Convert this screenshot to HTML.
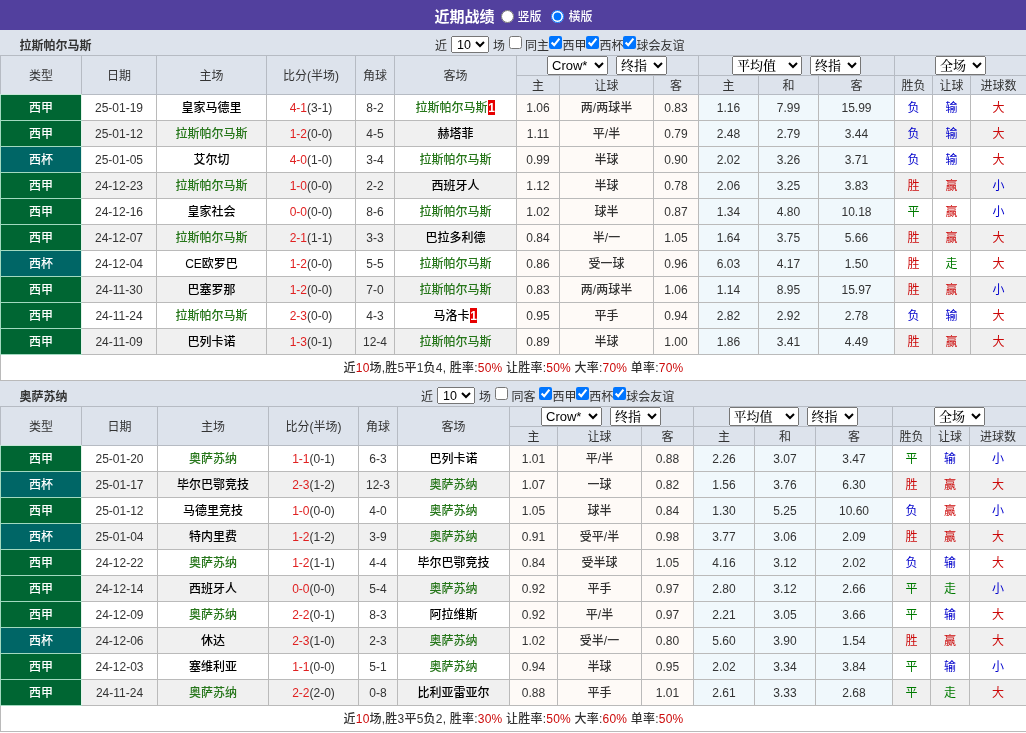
<!DOCTYPE html>
<html lang="zh-CN"><head><meta charset="utf-8"><title>近期战绩</title>
<style>
*{box-sizing:border-box}
html,body{margin:0;padding:0;background:#fff}
body{width:1026px;will-change:transform;overflow:hidden;font-family:"Liberation Sans","Noto Sans CJK SC",sans-serif;font-size:12px;color:#333;line-height:1}
.title{height:30px;background:#52409e;color:#fff;position:relative;font-size:12px}
.title b{position:absolute;left:434.6px;top:9px;font-size:15px;line-height:15px}
.title input{position:absolute;margin:0;top:10px;width:13px;height:13px}
.title span{position:absolute;top:11px;font-weight:500;margin-left:.6px;line-height:12px}
.tb{height:25px;background:#dde3ec;position:relative}
.tn{position:absolute;left:19.5px;top:10px;font-weight:bold;font-size:12px;line-height:12px;color:#333}
.flt{position:absolute;left:0;top:0;font-size:12px;white-space:nowrap;color:#333}
.flt span{position:absolute;top:10px;line-height:12px}
.flt input{position:absolute;margin:0;top:6px;width:13px;height:13px}
.flt select{position:absolute;top:6px;width:38px;height:17px;font-size:12.5px;padding:0 0 2px 1px;font-family:"Liberation Sans","Noto Serif CJK SC",sans-serif}
table.t{border-collapse:collapse;table-layout:fixed;width:1026px}
.t th,.t td{border:1px solid #bababa;text-align:center;padding:0;font-weight:normal;overflow:hidden;white-space:nowrap}
.t th{background:#dde3ec;color:#333;padding-top:2px;border-color:#b6bbc3}
.h1{height:20px}.h2{height:19px}
.h1 th[colspan]{padding-top:0;font-size:0;vertical-align:middle}
.h1 select{font-weight:500;height:19px;margin:0 4px;font-size:13px;vertical-align:middle;font-family:"Liberation Sans","Noto Serif CJK SC",sans-serif}
.s1,.s1+.s2{position:relative;left:-.5px}
.s1{width:61px}.s2{width:51px}.s3{width:70px}.s4{width:51px}
.t td{height:26px;font-weight:500}
tr.z td{background:#f0f0f0}
tr.a td.hc,tr.z td.hc{background:#fefaf7}
tr.a td.oc,tr.z td.oc{background:#f0f8fc}
.t td.lg1,.t td.lg2{border-color:#a3d9c0;border-right-color:#e3f4ea}
.t th.f{border-bottom-color:#c5e6d6}
.t td.lg1{background:#006633;color:#fff}
.t td.lg2{background:#006666;color:#fff}
.t a,.nm{color:#000}
.tm{color:#26761a}
.r{color:#e02020}
td.r,.sum .r{color:#cc0a0a}.b{color:#0000cc}.g{color:#007a00}
.t td.r,.t td.b,.t td.g{font-weight:400}
.rc{background:#e60000;color:#fff;font-style:normal;font-weight:bold;padding:1px .6px 0}
.sum td{height:26px;background:#fff;letter-spacing:.22px}
select{padding:0;margin:0}

</style></head><body>
<div class="title"><b>近期战绩</b><input type="radio" name="v" style="left:501px"><span style="left:517px">竖版</span><input type="radio" name="v" checked style="left:551px"><span style="left:568px">橫版</span></div>
<div class="tb t1"><b class="tn">拉斯帕尔马斯</b><div class="flt"><span style="left:435px">近</span><select style="left:451px"><option>10</option></select><span style="left:493px">场</span><input type="checkbox" style="left:509px"><span style="left:525px">同主</span><input type="checkbox" checked style="left:549.4px"><span style="left:562.4px">西甲</span><input type="checkbox" checked style="left:586.4px"><span style="left:599.4px">西杯</span><input type="checkbox" checked style="left:623.4px"><span style="left:636.4px">球会友谊</span></div></div>
<table class="t t1"><colgroup><col style="width:81px"><col style="width:75px"><col style="width:110px"><col style="width:89px"><col style="width:39px"><col style="width:122px"><col style="width:43px"><col style="width:94px"><col style="width:45px"><col style="width:60px"><col style="width:60px"><col style="width:76px"><col style="width:38px"><col style="width:38px"><col style="width:56px"></colgroup>
<tr class="h1"><th rowspan="2" class="f">类型</th><th rowspan="2">日期</th><th rowspan="2">主场</th><th rowspan="2">比分(半场)</th><th rowspan="2">角球</th><th rowspan="2">客场</th><th colspan="3"><select class="s1"><option>Crow*</option></select><select class="s2"><option>终指</option></select></th><th colspan="3"><select class="s3"><option>平均值</option></select><select class="s2"><option>终指</option></select></th><th colspan="3"><select class="s4"><option>全场</option></select></th></tr>
<tr class="h2"><th>主</th><th>让球</th><th>客</th><th>主</th><th>和</th><th>客</th><th>胜负</th><th>让球</th><th>进球数</th></tr>
<tr class="a"><td class="lg1">西甲</td><td>25-01-19</td><td><span class="nm">皇家马德里</span></td><td><span class="r">4-1</span>(3-1)</td><td>8-2</td><td><span class="tm">拉斯帕尔马斯</span><i class="rc">1</i></td><td class="hc">1.06</td><td class="hc">两/两球半</td><td class="hc">0.83</td><td class="oc">1.16</td><td class="oc">7.99</td><td class="oc">15.99</td><td class="b">负</td><td class="b">输</td><td class="r">大</td></tr>
<tr class="z"><td class="lg1">西甲</td><td>25-01-12</td><td><span class="tm">拉斯帕尔马斯</span></td><td><span class="r">1-2</span>(0-0)</td><td>4-5</td><td><span class="nm">赫塔菲</span></td><td class="hc">1.11</td><td class="hc">平/半</td><td class="hc">0.79</td><td class="oc">2.48</td><td class="oc">2.79</td><td class="oc">3.44</td><td class="b">负</td><td class="b">输</td><td class="r">大</td></tr>
<tr class="a"><td class="lg2">西杯</td><td>25-01-05</td><td><span class="nm">艾尔切</span></td><td><span class="r">4-0</span>(1-0)</td><td>3-4</td><td><span class="tm">拉斯帕尔马斯</span></td><td class="hc">0.99</td><td class="hc">半球</td><td class="hc">0.90</td><td class="oc">2.02</td><td class="oc">3.26</td><td class="oc">3.71</td><td class="b">负</td><td class="b">输</td><td class="r">大</td></tr>
<tr class="z"><td class="lg1">西甲</td><td>24-12-23</td><td><span class="tm">拉斯帕尔马斯</span></td><td><span class="r">1-0</span>(0-0)</td><td>2-2</td><td><span class="nm">西班牙人</span></td><td class="hc">1.12</td><td class="hc">半球</td><td class="hc">0.78</td><td class="oc">2.06</td><td class="oc">3.25</td><td class="oc">3.83</td><td class="r">胜</td><td class="r">赢</td><td class="b">小</td></tr>
<tr class="a"><td class="lg1">西甲</td><td>24-12-16</td><td><span class="nm">皇家社会</span></td><td><span class="r">0-0</span>(0-0)</td><td>8-6</td><td><span class="tm">拉斯帕尔马斯</span></td><td class="hc">1.02</td><td class="hc">球半</td><td class="hc">0.87</td><td class="oc">1.34</td><td class="oc">4.80</td><td class="oc">10.18</td><td class="g">平</td><td class="r">赢</td><td class="b">小</td></tr>
<tr class="z"><td class="lg1">西甲</td><td>24-12-07</td><td><span class="tm">拉斯帕尔马斯</span></td><td><span class="r">2-1</span>(1-1)</td><td>3-3</td><td><span class="nm">巴拉多利德</span></td><td class="hc">0.84</td><td class="hc">半/一</td><td class="hc">1.05</td><td class="oc">1.64</td><td class="oc">3.75</td><td class="oc">5.66</td><td class="r">胜</td><td class="r">赢</td><td class="r">大</td></tr>
<tr class="a"><td class="lg2">西杯</td><td>24-12-04</td><td><span class="nm">CE欧罗巴</span></td><td><span class="r">1-2</span>(0-0)</td><td>5-5</td><td><span class="tm">拉斯帕尔马斯</span></td><td class="hc">0.86</td><td class="hc">受一球</td><td class="hc">0.96</td><td class="oc">6.03</td><td class="oc">4.17</td><td class="oc">1.50</td><td class="r">胜</td><td class="g">走</td><td class="r">大</td></tr>
<tr class="z"><td class="lg1">西甲</td><td>24-11-30</td><td><span class="nm">巴塞罗那</span></td><td><span class="r">1-2</span>(0-0)</td><td>7-0</td><td><span class="tm">拉斯帕尔马斯</span></td><td class="hc">0.83</td><td class="hc">两/两球半</td><td class="hc">1.06</td><td class="oc">1.14</td><td class="oc">8.95</td><td class="oc">15.97</td><td class="r">胜</td><td class="r">赢</td><td class="b">小</td></tr>
<tr class="a"><td class="lg1">西甲</td><td>24-11-24</td><td><span class="tm">拉斯帕尔马斯</span></td><td><span class="r">2-3</span>(0-0)</td><td>4-3</td><td><span class="nm">马洛卡</span><i class="rc">1</i></td><td class="hc">0.95</td><td class="hc">平手</td><td class="hc">0.94</td><td class="oc">2.82</td><td class="oc">2.92</td><td class="oc">2.78</td><td class="b">负</td><td class="b">输</td><td class="r">大</td></tr>
<tr class="z"><td class="lg1">西甲</td><td>24-11-09</td><td><span class="nm">巴列卡诺</span></td><td><span class="r">1-3</span>(0-1)</td><td>12-4</td><td><span class="tm">拉斯帕尔马斯</span></td><td class="hc">0.89</td><td class="hc">半球</td><td class="hc">1.00</td><td class="oc">1.86</td><td class="oc">3.41</td><td class="oc">4.49</td><td class="r">胜</td><td class="r">赢</td><td class="r">大</td></tr>
<tr class="sum"><td colspan="15">近<span class="r">10</span>场,胜5平1负4, 胜率:<span class="r">50%</span> 让胜率:<span class="r">50%</span> 大率:<span class="r">70%</span> 单率:<span class="r">70%</span></td></tr>
</table>
<div class="tb t2"><b class="tn">奥萨苏纳</b><div class="flt"><span style="left:421px">近</span><select style="left:437px"><option>10</option></select><span style="left:479px">场</span><input type="checkbox" style="left:495px"><span style="left:511.5px">同客</span><input type="checkbox" checked style="left:539.3px"><span style="left:552.5px">西甲</span><input type="checkbox" checked style="left:576.3px"><span style="left:589.3px">西杯</span><input type="checkbox" checked style="left:613.3px"><span style="left:626.3px">球会友谊</span></div></div>
<table class="t t2"><colgroup><col style="width:81px"><col style="width:76px"><col style="width:111px"><col style="width:90px"><col style="width:39px"><col style="width:112px"><col style="width:48px"><col style="width:84px"><col style="width:52px"><col style="width:61px"><col style="width:61px"><col style="width:77px"><col style="width:38px"><col style="width:39px"><col style="width:57px"></colgroup>
<tr class="h1"><th rowspan="2" class="f">类型</th><th rowspan="2">日期</th><th rowspan="2">主场</th><th rowspan="2">比分(半场)</th><th rowspan="2">角球</th><th rowspan="2">客场</th><th colspan="3"><select class="s1"><option>Crow*</option></select><select class="s2"><option>终指</option></select></th><th colspan="3"><select class="s3"><option>平均值</option></select><select class="s2"><option>终指</option></select></th><th colspan="3"><select class="s4"><option>全场</option></select></th></tr>
<tr class="h2"><th>主</th><th>让球</th><th>客</th><th>主</th><th>和</th><th>客</th><th>胜负</th><th>让球</th><th>进球数</th></tr>
<tr class="a"><td class="lg1">西甲</td><td>25-01-20</td><td><span class="tm">奥萨苏纳</span></td><td><span class="r">1-1</span>(0-1)</td><td>6-3</td><td><span class="nm">巴列卡诺</span></td><td class="hc">1.01</td><td class="hc">平/半</td><td class="hc">0.88</td><td class="oc">2.26</td><td class="oc">3.07</td><td class="oc">3.47</td><td class="g">平</td><td class="b">输</td><td class="b">小</td></tr>
<tr class="z"><td class="lg2">西杯</td><td>25-01-17</td><td><span class="nm">毕尔巴鄂竞技</span></td><td><span class="r">2-3</span>(1-2)</td><td>12-3</td><td><span class="tm">奥萨苏纳</span></td><td class="hc">1.07</td><td class="hc">一球</td><td class="hc">0.82</td><td class="oc">1.56</td><td class="oc">3.76</td><td class="oc">6.30</td><td class="r">胜</td><td class="r">赢</td><td class="r">大</td></tr>
<tr class="a"><td class="lg1">西甲</td><td>25-01-12</td><td><span class="nm">马德里竞技</span></td><td><span class="r">1-0</span>(0-0)</td><td>4-0</td><td><span class="tm">奥萨苏纳</span></td><td class="hc">1.05</td><td class="hc">球半</td><td class="hc">0.84</td><td class="oc">1.30</td><td class="oc">5.25</td><td class="oc">10.60</td><td class="b">负</td><td class="r">赢</td><td class="b">小</td></tr>
<tr class="z"><td class="lg2">西杯</td><td>25-01-04</td><td><span class="nm">特内里费</span></td><td><span class="r">1-2</span>(1-2)</td><td>3-9</td><td><span class="tm">奥萨苏纳</span></td><td class="hc">0.91</td><td class="hc">受平/半</td><td class="hc">0.98</td><td class="oc">3.77</td><td class="oc">3.06</td><td class="oc">2.09</td><td class="r">胜</td><td class="r">赢</td><td class="r">大</td></tr>
<tr class="a"><td class="lg1">西甲</td><td>24-12-22</td><td><span class="tm">奥萨苏纳</span></td><td><span class="r">1-2</span>(1-1)</td><td>4-4</td><td><span class="nm">毕尔巴鄂竞技</span></td><td class="hc">0.84</td><td class="hc">受半球</td><td class="hc">1.05</td><td class="oc">4.16</td><td class="oc">3.12</td><td class="oc">2.02</td><td class="b">负</td><td class="b">输</td><td class="r">大</td></tr>
<tr class="z"><td class="lg1">西甲</td><td>24-12-14</td><td><span class="nm">西班牙人</span></td><td><span class="r">0-0</span>(0-0)</td><td>5-4</td><td><span class="tm">奥萨苏纳</span></td><td class="hc">0.92</td><td class="hc">平手</td><td class="hc">0.97</td><td class="oc">2.80</td><td class="oc">3.12</td><td class="oc">2.66</td><td class="g">平</td><td class="g">走</td><td class="b">小</td></tr>
<tr class="a"><td class="lg1">西甲</td><td>24-12-09</td><td><span class="tm">奥萨苏纳</span></td><td><span class="r">2-2</span>(0-1)</td><td>8-3</td><td><span class="nm">阿拉维斯</span></td><td class="hc">0.92</td><td class="hc">平/半</td><td class="hc">0.97</td><td class="oc">2.21</td><td class="oc">3.05</td><td class="oc">3.66</td><td class="g">平</td><td class="b">输</td><td class="r">大</td></tr>
<tr class="z"><td class="lg2">西杯</td><td>24-12-06</td><td><span class="nm">休达</span></td><td><span class="r">2-3</span>(1-0)</td><td>2-3</td><td><span class="tm">奥萨苏纳</span></td><td class="hc">1.02</td><td class="hc">受半/一</td><td class="hc">0.80</td><td class="oc">5.60</td><td class="oc">3.90</td><td class="oc">1.54</td><td class="r">胜</td><td class="r">赢</td><td class="r">大</td></tr>
<tr class="a"><td class="lg1">西甲</td><td>24-12-03</td><td><span class="nm">塞维利亚</span></td><td><span class="r">1-1</span>(0-0)</td><td>5-1</td><td><span class="tm">奥萨苏纳</span></td><td class="hc">0.94</td><td class="hc">半球</td><td class="hc">0.95</td><td class="oc">2.02</td><td class="oc">3.34</td><td class="oc">3.84</td><td class="g">平</td><td class="b">输</td><td class="b">小</td></tr>
<tr class="z"><td class="lg1">西甲</td><td>24-11-24</td><td><span class="tm">奥萨苏纳</span></td><td><span class="r">2-2</span>(2-0)</td><td>0-8</td><td><span class="nm">比利亚雷亚尔</span></td><td class="hc">0.88</td><td class="hc">平手</td><td class="hc">1.01</td><td class="oc">2.61</td><td class="oc">3.33</td><td class="oc">2.68</td><td class="g">平</td><td class="g">走</td><td class="r">大</td></tr>
<tr class="sum"><td colspan="15">近<span class="r">10</span>场,胜3平5负2, 胜率:<span class="r">30%</span> 让胜率:<span class="r">50%</span> 大率:<span class="r">60%</span> 单率:<span class="r">50%</span></td></tr>
</table>
</body></html>
